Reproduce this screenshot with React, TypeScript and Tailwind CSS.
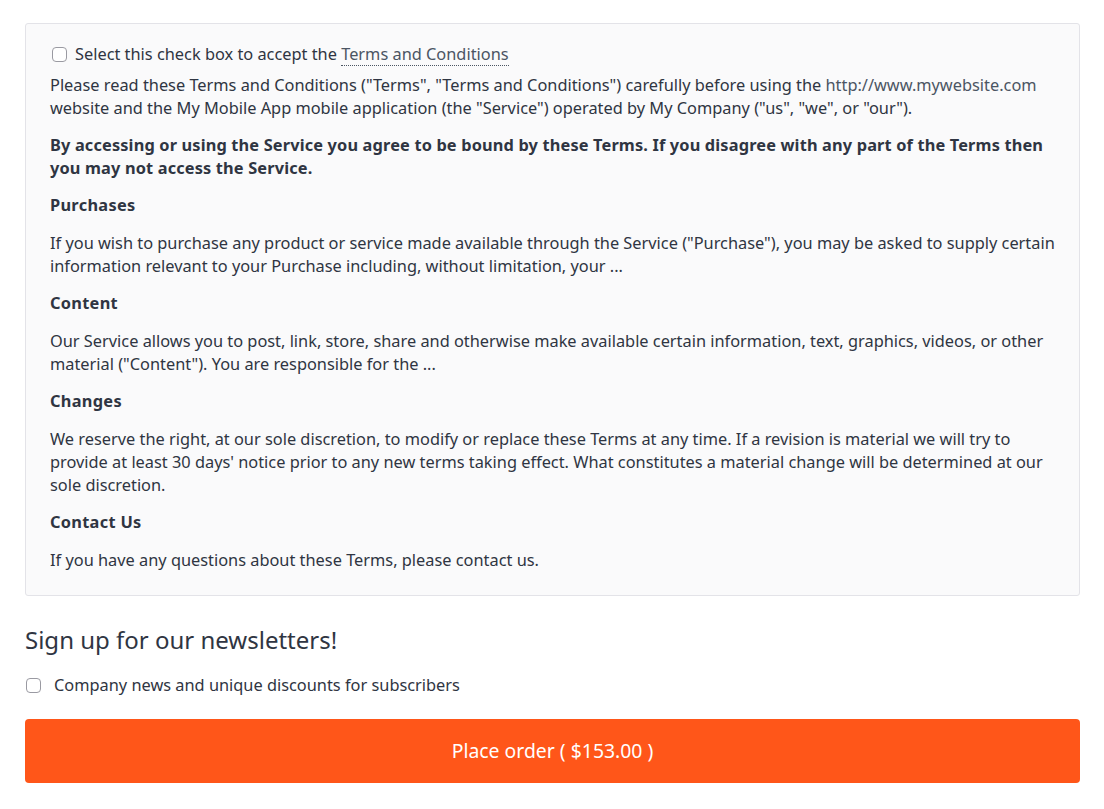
import { useState } from "react";

const sections = [
  {
    title: "Purchases",
    body: [
      'If you wish to purchase any product or service made available through the Service ("Purchase"), you may be asked to supply certain information relevant to your Purchase including, without limitation, your ...',
    ],
  },
  {
    title: "Content",
    body: [
      'Our Service allows you to post, link, store, share and otherwise make available certain information, text, graphics, videos, or other material ("Content"). You are responsible for the ...',
    ],
  },
  {
    title: "Changes",
    body: [
      "We reserve the right, at our sole discretion, to modify or replace these Terms at any time. If a revision is material we will try to provide at least 30 days' notice prior to any new terms taking effect. What constitutes a material change will be determined at our sole discretion.",
    ],
  },
  {
    title: "Contact Us",
    body: ["If you have any questions about these Terms, please contact us."],
  },
];

function Checkbox({
  checked,
  onChange,
}: {
  checked: boolean;
  onChange: (value: boolean) => void;
}) {
  return (
    <input
      type="checkbox"
      checked={checked}
      onChange={(e) => onChange(e.target.checked)}
      className="h-[15px] w-[15px] shrink-0 cursor-pointer appearance-none rounded-[4px] border border-[#9a9aa2] bg-white checked:border-[#ff5619] checked:bg-[#ff5619]"
    />
  );
}

export default function App() {
  const [accepted, setAccepted] = useState(false);
  const [newsletter, setNewsletter] = useState(false);

  return (
    <div
      className="bg-white pl-[25px] pr-[24px] pt-[23px] text-[16.35px] text-[#2f3542]"
      style={{ fontFamily: '"Noto Sans", "Open Sans", sans-serif' }}
    >
      <div className="rounded-[3px] border border-[#e3e3e8] bg-[#fafafb] px-[24px] pb-[9px] pt-[19px] leading-[23px]">
        <label className="flex items-center gap-[8px] pl-[2px]">
          <Checkbox checked={accepted} onChange={setAccepted} />
          <span>
            Select this check box to accept the{" "}
            <a
              href="#"
              className="border-b border-dotted border-[#4b5563] text-[#4b5563]"
            >
              Terms and Conditions
            </a>
          </span>
        </label>

        <p className="mb-[14px] mt-[8px]">
          Please read these Terms and Conditions ("Terms", "Terms and
          Conditions") carefully before using the{" "}
          <a href="#" className="text-[#4b5563]">
            http://www.mywebsite.com
          </a>{" "}
          website and the My Mobile App mobile application (the "Service")
          operated by My Company ("us", "we", or "our").
        </p>

        <p className="mb-[14px] font-bold tracking-[0.15px]">
          By accessing or using the Service you agree to be bound by these
          Terms. If you disagree with any part of the Terms then you may not
          access the Service.
        </p>

        {sections.map((section) => (
          <div key={section.title}>
            <h3 className="mb-[15px] font-bold tracking-[0.3px]">
              {section.title}
            </h3>
            {section.body.map((text) => (
              <p key={text} className="mb-[14px]">
                {text}
              </p>
            ))}
          </div>
        ))}
      </div>

      <h2 className="mt-[26px] text-[24px] leading-[36px] text-[#2f3542]">
        Sign up for our newsletters!
      </h2>

      <label className="mt-[16px] flex items-center gap-[13px] pl-px leading-[23px]">
        <Checkbox checked={newsletter} onChange={setNewsletter} />
        <span>Company news and unique discounts for subscribers</span>
      </label>

      <button
        type="button"
        className="mt-[22px] flex h-[64px] w-full items-center justify-center rounded-[4px] bg-[#ff5619] text-[19.4px] text-white"
      >
        Place order ( $153.00 )
      </button>
    </div>
  );
}
